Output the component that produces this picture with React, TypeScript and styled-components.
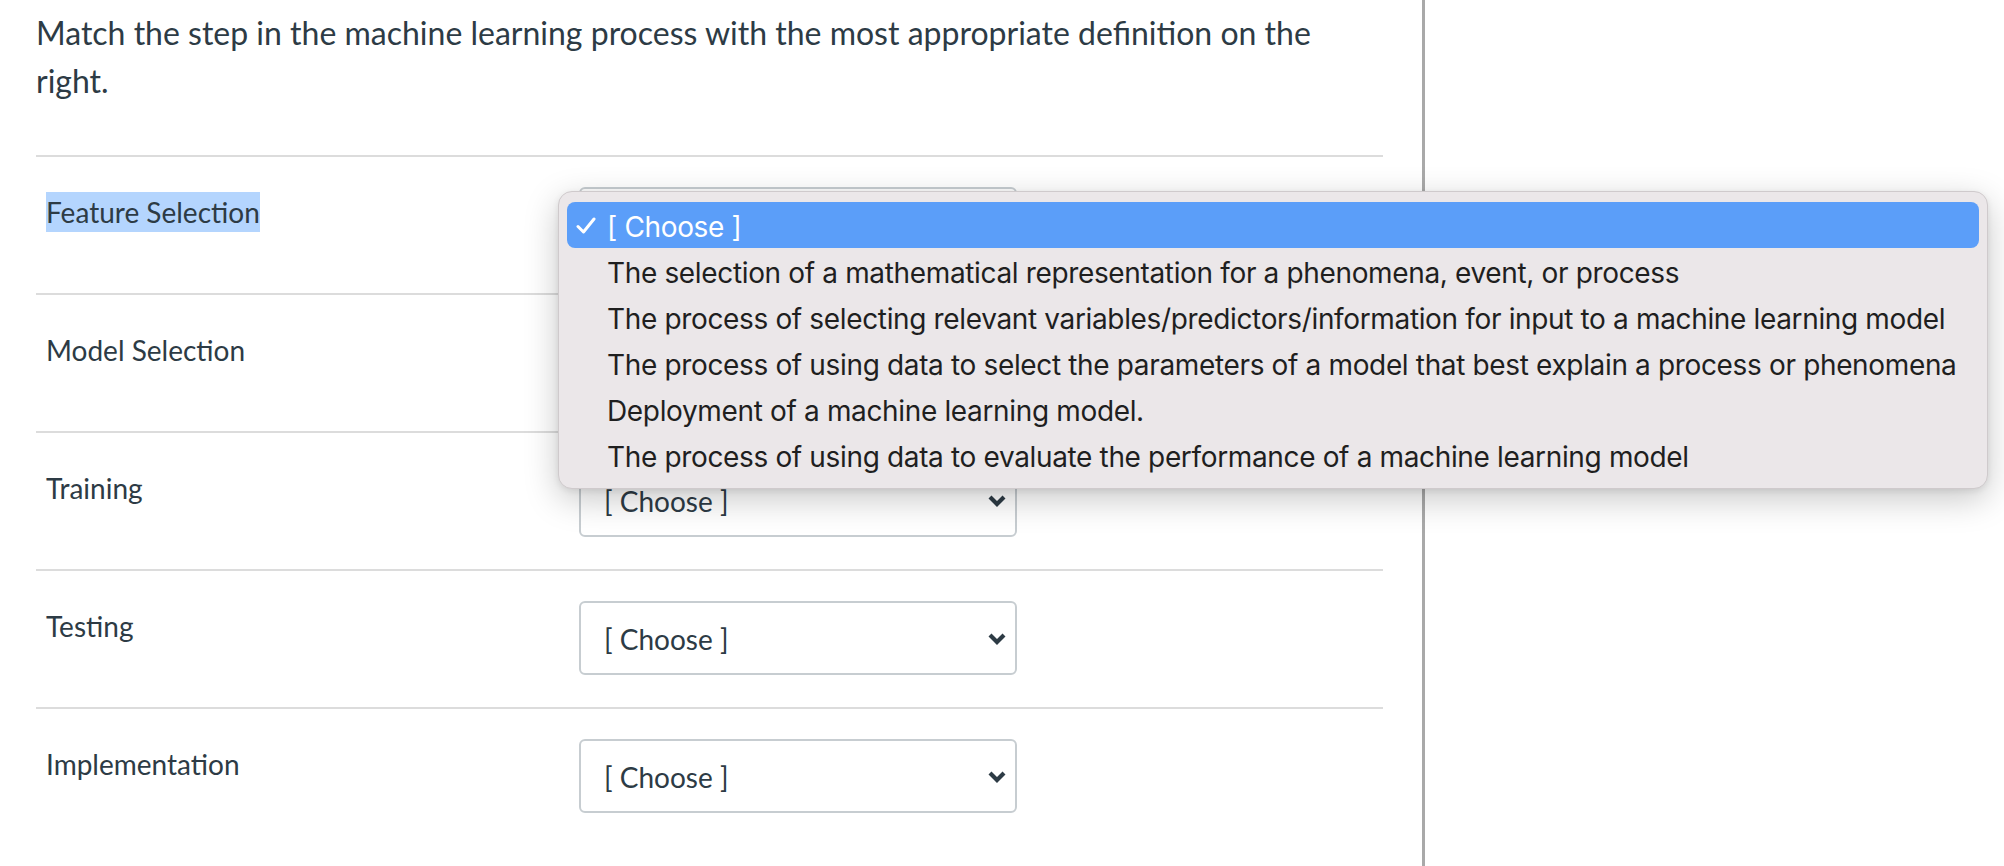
import React from "react";
import styled, { createGlobalStyle } from "styled-components";

const GlobalStyle = createGlobalStyle`
  html, body, #root {
    margin: 0;
    padding: 0;
    height: 100%;
    background: #fff;
  }
  body {
    font-family: Lato, "Noto Sans", sans-serif;
    color: #2d3b45;
  }
`;

const Page = styled.div`
  display: flex;
  min-height: 866px;
`;

const Main = styled.div`
  box-sizing: border-box;
  width: 1425px;
  padding: 9px 39px 0 36px;
  border-right: 3px solid #a9a9a9;
`;

const Question = styled.p`
  margin: 0 0 50px;
  font-size: 32px;
  line-height: 48px;
`;

const AnswerRow = styled.div`
  display: flex;
  align-items: flex-start;
  border-top: 2px solid #dcdcdc;
  padding-bottom: 32px;
`;

const Label = styled.div`
  box-sizing: border-box;
  width: 543px;
  padding: 35px 0 0 10px;
  font-size: 28px;
  line-height: 40px;
`;

const Selected = styled.span`
  display: inline-block;
  background: #b4d5fe;
`;

const SelectWrap = styled.div`
  position: relative;
  margin-top: 30px;
`;

const SelectBox = styled.div`
  box-sizing: border-box;
  width: 438px;
  height: 74px;
  display: flex;
  align-items: center;
  justify-content: space-between;
  padding: 2px 8px 0 23px;
  border: 2px solid #c7cdd1;
  border-radius: 6px;
  background: #fff;
  font-size: 28px;
  line-height: 40px;
`;

const Menu = styled.ul`
  position: absolute;
  left: -21px;
  top: 4px;
  z-index: 10;
  box-sizing: border-box;
  width: 1430px;
  margin: 0;
  padding: 10px 8px;
  list-style: none;
  background: #ebe7e9;
  border: 1px solid #cfcacc;
  border-radius: 14px;
  box-shadow: 0 10px 34px rgba(0, 0, 0, 0.22), 0 2px 6px rgba(0, 0, 0, 0.08);
  font-family: Inter, "Liberation Sans", sans-serif;
  font-size: 28px;
`;

const MenuItem = styled.li<{ $active?: boolean }>`
  display: flex;
  align-items: center;
  box-sizing: border-box;
  height: 46px;
  padding: 3px 0 0 40px;
  position: relative;
  border-radius: 8px;
  white-space: nowrap;
  letter-spacing: -0.35px;
  color: ${(p) => (p.$active ? "#fff" : "#1f1f1f")};
  background: ${(p) => (p.$active ? "#5b9ef9" : "transparent")};
`;

const Check = styled.svg`
  position: absolute;
  left: 9px;
  top: 15px;
`;

const rows = [
  "Feature Selection",
  "Model Selection",
  "Training",
  "Testing",
  "Implementation",
];

const options = [
  "[ Choose ]",
  "The selection of a mathematical representation for a phenomena, event, or process",
  "The process of selecting relevant variables/predictors/information for input to a machine learning model",
  "The process of using data to select the parameters of a model that best explain a process or phenomena",
  "Deployment of a machine learning model.",
  "The process of using data to evaluate the performance of a machine learning model",
];

const Chevron = () => (
  <svg width="20" height="14" viewBox="0 0 20 14">
    <path d="M3 3 L10 10 L17 3" fill="none" stroke="#2d3b45" strokeWidth="4.2" />
  </svg>
);

export default function App() {
  return (
    <>
      <GlobalStyle />
      <Page>
        <Main>
          <Question>
            Match the step in the machine learning process with the most appropriate definition on the right.
          </Question>
          {rows.map((name, i) => (
            <AnswerRow key={name}>
              <Label>{i === 0 ? <Selected>{name}</Selected> : name}</Label>
              <SelectWrap>
                <SelectBox>
                  <span>[ Choose ]</span>
                  <Chevron />
                </SelectBox>
                {i === 0 && (
                  <Menu>
                    {options.map((o, j) => (
                      <MenuItem key={o} $active={j === 0}>
                        {j === 0 && (
                          <Check width="20" height="18" viewBox="0 0 20 18">
                            <path d="M2 9.5 L7.5 15 L18 2" fill="none" stroke="#fff" strokeWidth="3" strokeLinecap="round" strokeLinejoin="round" />
                          </Check>
                        )}
                        {o}
                      </MenuItem>
                    ))}
                  </Menu>
                )}
              </SelectWrap>
            </AnswerRow>
          ))}
        </Main>
      </Page>
    </>
  );
}
